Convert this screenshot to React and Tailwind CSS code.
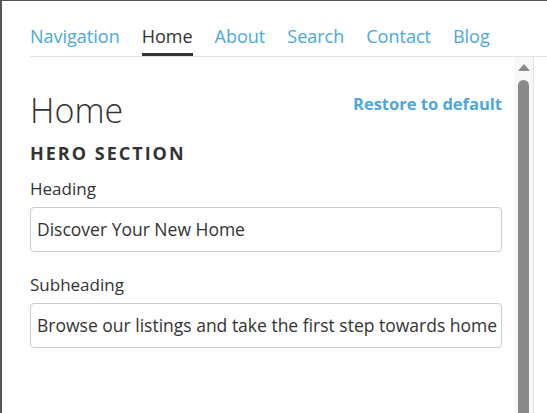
import React from "react";

const tabs = ["Navigation", "Home", "About", "Search", "Contact", "Blog"];

const Field = ({ label, value }) => (
  <div className="flex flex-col">
    <label className="text-[17px] leading-[22px] text-[#333]">{label}</label>
    <div className="mt-[7px] h-[45px] border border-[#ccc] rounded-[4px] flex items-center px-[6px] overflow-hidden whitespace-nowrap text-[17.5px] text-[#333]">
      {value}
    </div>
  </div>
);

const App = () => {
  return (
    <div
      className="w-[547px] h-[413px] overflow-hidden bg-white border-t border-l-2 border-[#555] flex flex-col"
      style={{ fontFamily: "'Open Sans', 'Noto Sans', sans-serif" }}
    >
      <nav className="h-[56px] ml-[28px] border-b border-[#e2e2e2] flex items-end gap-[22px]">
        {tabs.map((t) => (
          <div
            key={t}
            className={`pb-[5px] text-[18px] leading-[24px] border-b-[3px] ${
              t === "Home"
                ? "text-[#333] border-[#333]"
                : "text-[#4aa8dc] border-transparent"
            }`}
          >
            {t}
          </div>
        ))}
      </nav>
      <div className="flex flex-1 min-h-0">
        <div className="w-[532px] flex border-r border-[#e2e2e2]">
          <div className="flex-1 min-w-0 pl-[28px] pr-[12px] pt-[34px]">
            <div className="flex items-start justify-between">
              <h1 className="text-[34px] leading-[38px] font-light text-[#333]">Home</h1>
              <button className="mt-[1px] text-[16.5px] font-bold text-[#4aa8dc]">
                Restore to default
              </button>
            </div>
            <h2 className="mt-[12px] text-[18px] font-bold tracking-[2px] text-[#333] leading-[24px]">
              HERO SECTION
            </h2>
            <div className="mt-[13px] flex flex-col gap-[22px]">
              <Field label="Heading" value="Discover Your New Home" />
              <Field
                label="Subheading"
                value="Browse our listings and take the first step towards home"
              />
            </div>
          </div>
          <div className="w-[19px] shrink-0 bg-[#f8f8f8] flex flex-col items-center pt-[7px]">
            <div className="w-0 h-0 border-l-[6px] border-r-[6px] border-b-[7px] border-l-transparent border-r-transparent border-b-[#8a8a8a]" />
            <div className="mt-[9px] w-[11px] flex-1 bg-[#8a8a8a] rounded-t-[6px]" />
          </div>
        </div>
      </div>
    </div>
  );
};

export default App;
